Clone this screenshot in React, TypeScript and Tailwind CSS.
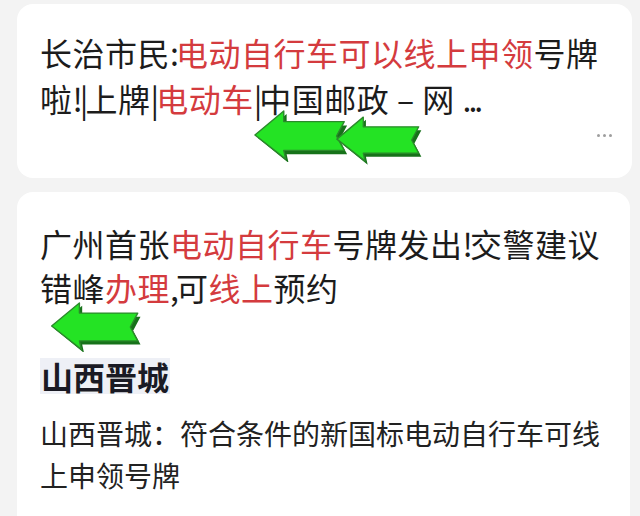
import React from 'react';

const font = { fontFamily: '"Noto Sans CJK SC", "Noto Sans", sans-serif' };

function GreenArrow({ className }: { className: string }) {
  // left-pointing block arrow with notched tail and a dark green 3D edge
  return (
    <svg viewBox="0 0 100 54" className={className}>
      <path
        d="M4 29 L34 4 L34 16 L97 16 L89 31 L97 46 L34 46 L36 55 Z"
        fill="#17721a"
      />
      <path
        d="M1 26 L31 1 L31 12 L94 12 L86 27 L94 42 L31 42 L33 51 Z"
        fill="#24e324"
        stroke="#2b8a2b"
        strokeWidth="1.5"
        strokeLinejoin="round"
      />
    </svg>
  );
}

const Thin = ({ children }: { children: React.ReactNode }) => (
  <span className="tracking-[-3px]">{children}</span>
);

export default function App() {
  return (
    <div className="relative w-[640px] h-[516px] overflow-hidden bg-[#f3f3f3]" style={font}>
      <div className="flex flex-col pl-[17px] pr-[8px] pt-[4px]">
        <div className="relative h-[174px] rounded-[16px] bg-white pl-[23px] pt-[25px]">
          <p className="text-[32px] leading-[46px] text-[#1c1c1c] tracking-[0.5px]">
            长治市民<Thin>:</Thin><span className="text-[#d43b3e]">电动自行车可以线上申领</span>号牌
            <br />
            啦<Thin>!|</Thin>上牌<Thin>|</Thin><span className="text-[#d43b3e]">电动车</span><Thin>|</Thin>中国邮政 – 网 <Thin>...</Thin>
          </p>
          <div className="absolute right-[20px] top-[130px] flex gap-[3px]">
            <span className="h-[3px] w-[3px] rounded-full bg-[#9e9e9e]" />
            <span className="h-[3px] w-[3px] rounded-full bg-[#9e9e9e]" />
            <span className="h-[3px] w-[3px] rounded-full bg-[#9e9e9e]" />
          </div>
        </div>

        <div className="mt-[14px] mr-[2px] h-[330px] rounded-t-[16px] bg-white pl-[23px] pt-[29px]">
          <p className="text-[32px] leading-[44px] text-[#1c1c1c] tracking-[0.5px]">
            广州首张<span className="text-[#d43b3e]">电动自行车</span>号牌发出<Thin>!</Thin>交警建议
            <br />
            错峰<span className="text-[#d43b3e]">办理</span><Thin>,</Thin>可<span className="text-[#d43b3e]">线上</span>预约
          </p>

          <h2 className="mt-[49px] w-fit bg-[#eef0f6] px-[1px] text-[32px] leading-[36px] font-bold text-[#1a1a24]">山西晋城</h2>
          <p className="mt-[18px] text-[28px] leading-[42px] text-[#222]">
            山西晋城：符合条件的新国标电动自行车可线
            <br />
            上申领号牌
          </p>
        </div>
      </div>

      <GreenArrow className="absolute left-[254px] top-[110px] w-[96px] h-[52px]" />
      <GreenArrow className="absolute left-[336px] top-[114px] w-[88px] h-[52px]" />
      <GreenArrow className="absolute left-[48px] top-[302px] w-[98px] h-[50px]" />
    </div>
  );
}
